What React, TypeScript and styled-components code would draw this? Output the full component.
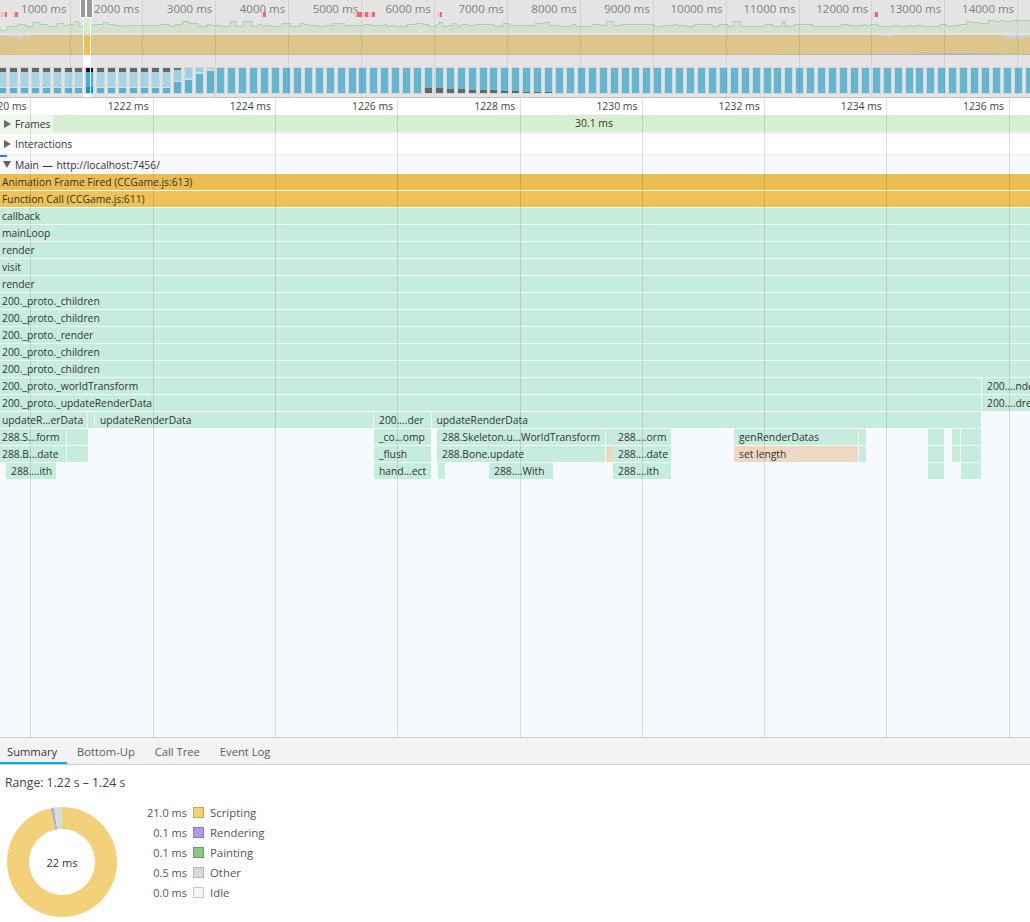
import React from "react";
import styled, { createGlobalStyle } from "styled-components";

const Global = createGlobalStyle`
  html, body { margin: 0; padding: 0; background: #fff; }
  body { font-family: "Open Sans", "Liberation Sans", sans-serif; font-size: 11px; color: #333; }
`;

const Page = styled.div`
  width: 1030px; height: 922px; overflow: hidden; display: flex; flex-direction: column;
`;

/* ---------- overview ---------- */
const Overview = styled.div`
  position: relative; height: 97px; background: #e4e4e4; border-bottom: 1px solid #c0c0c0; flex: none; overflow: hidden;
`;
const OverviewLabels = styled.div`
  height: 13px; overflow: hidden; display: flex; flex: none;
`;
const OverviewLabel = styled.div`
  flex: none; width: 72.9px; text-align: right; padding-right: 3px; box-sizing: border-box;
  font-size: 11.5px; line-height: 18px; color: #808080;
  &:first-child { width: 69.5px; }
`;
const Marks = styled.div`
  position: absolute; top: 12px; left: 0; right: 0; height: 5px;
`;
const Mark = styled.div<{ $x: number; $w: number; $p: number }>`
  position: absolute; top: 0; height: 5px; left: ${(p) => p.$x}px; width: ${(p) => p.$w}px;
  background: linear-gradient(90deg, #e9c9c9 ${(p) => p.$p}%, #ee6a6a ${(p) => p.$p}%);
`;
const ChartSvg = styled.svg`
  display: block; flex: none;
`;
const ThumbStrip = styled.div`
  position: absolute; left: -2px; top: 67px; display: flex;
`;
const thumbBg: Record<string, string> = {
  intro: "linear-gradient(#666 0 4px, #a6d5e7 4px 19px, #cfe4ec 19px 20px, #5cb0cc 20px)",
  sel: "linear-gradient(#111 0 4px, #3fb3e6 4px 19px, #009bd6 19px)",
  fade: "linear-gradient(#707070 0 2px, #9ad0e5 2px 13px, #cfe4ec 13px 14px, #5cb0cc 14px)",
  fade1: "linear-gradient(#9ad0e5 0 10px, #c4e1ec 10px 12px, #60b3cf 12px)",
  fade2: "linear-gradient(#9ad0e5 0 4px, #c4e1ec 4px 6px, #60b3cf 6px)",
  fade3: "linear-gradient(#9ad0e5 0 1px, #c4e1ec 1px 3px, #60b3cf 3px)",
  plain: "#63b7d2",
};
const Thumb = styled.div<{ $kind: string; $dark: number }>`
  flex: none; width: 9px; height: 27px; margin-right: 1.93px; box-sizing: border-box;
  border: 1px solid #d6d6d6;
  background: ${(p) =>
    p.$dark > 0
      ? `linear-gradient(#63b7d2 0 ${25 - p.$dark}px, #666 ${25 - p.$dark}px)`
      : thumbBg[p.$kind]};
`;
const OverviewGrid = styled.div<{ $x: number }>`
  position: absolute; top: 0; bottom: 0; left: ${(p) => p.$x}px; width: 1px; background: rgba(0, 0, 0, 0.07);
`;
const SelectionWindow = styled.div`
  position: absolute; left: 83px; top: 17px; bottom: 0; width: 8px; box-sizing: border-box;
  border: 1px solid #fff; border-width: 0 1px;
  background: linear-gradient(rgba(215,240,205,.75) 0 16px, transparent 16px 18px, #eebf52 18px 38px, #fff 38px 50px, transparent 50px 77px, #fff 77px);
`;
const Handle = styled.div<{ $x: number; $w: number }>`
  position: absolute; top: 0; left: ${(p) => p.$x}px; width: ${(p) => p.$w}px; height: 18px; box-sizing: border-box;
  background: #9a9a9a; border: solid #fff; border-width: 0 1px 1px;
`;

/* ---------- detail timeline ---------- */
const Detail = styled.div`
  position: relative; height: 639px; flex: none; overflow: hidden; background: #f6f9fe;
`;
const Ruler = styled.div`
  height: 17px; background: #fff; display: flex; line-height: 16px; font-size: 10.4px; color: #444;
`;
const RulerLabel = styled.div`
  flex: none; width: 122.2px; display: flex; justify-content: flex-end; padding-right: 4px; box-sizing: border-box; white-space: nowrap; overflow: hidden;
  &:first-child { width: 30.5px; }
`;
const FramesRow = styled.div`
  position: relative; height: 17px; background: #d6efd2; border-bottom: 2px solid #f3f3f3; display: flex; align-items: center; justify-content: center;
`;
const FrameTime = styled.span`
  position: relative; left: 79px; line-height: 17px; font-size: 10.4px; color: #333;
`;
const TrackLabel = styled.div<{ $bg?: string }>`
  position: absolute; left: 0; top: 0; bottom: 0; display: flex; align-items: center; gap: 4px; padding: 0 3px 0 4px;
  background: ${(p) => p.$bg || "transparent"}; font-size: 10.3px; color: #333; word-spacing: 1px;
`;
const Arrow = styled.span<{ $open?: boolean }>`
  display: inline-block; width: 0; height: 0;
  ${(p) =>
    p.$open
      ? "border-left: 4px solid transparent; border-right: 4px solid transparent; border-top: 7px solid #666;margin-left:-1px;"
      : "border-top: 4px solid transparent; border-bottom: 4px solid transparent; border-left: 7px solid #666;"}
`;
const InteractionsRow = styled.div`
  position: relative; height: 20px; background: #fff; border-bottom: 1px solid #eee;
`;
const MainHeader = styled.div`
  position: relative; height: 19px; background: #f6f9fe;
  &::before { content: ""; position: absolute; left: 0; top: 0; width: 7px; height: 2px; background: #3b78e7; }
`;
const FlameRow = styled.div`
  position: relative; height: 17px;
`;
const Bar = styled.div<{ $x: number; $w: number; $c?: string }>`
  position: absolute; top: 0; left: ${(p) => p.$x}px; width: ${(p) => p.$w}px; height: 16px;
  background: ${(p) => p.$c || "#c6ecdd"}; overflow: hidden; white-space: nowrap;
  line-height: 16px; font-size: 10.3px; color: #333; padding-left: ${(p) => (p.$w > 20 ? 2 : 0)}px; box-sizing: border-box;
`;
const Indented = styled.span`
  padding-left: 3px;
`;
const GridLine = styled.div<{ $x: number }>`
  position: absolute; top: 0; bottom: 0; left: ${(p) => p.$x}px; width: 1px; background: rgba(0, 0, 0, 0.12); pointer-events: none;
`;

/* ---------- bottom panel ---------- */
const Tabs = styled.div`
  height: 26px; flex: none; background: #f3f3f3; border-top: 1px solid #ccc; border-bottom: 1px solid #ccc; display: flex;
`;
const Tab = styled.div<{ $active?: boolean }>`
  padding: 0 10px 0 ${(p) => (p.$active ? 7 : 10)}px; line-height: 28px; font-size: 11.2px; color: ${(p) => (p.$active ? "#333" : "#5a5a5a")};
  height: 26px; box-sizing: border-box;
  ${(p) => (p.$active ? "box-shadow: inset 0 -2px 0 #03a9f4;" : "")}
`;
const Summary = styled.div`
  flex: 1; background: #fff; padding: 9px 5px 0; display: flex; flex-direction: column;
`;
const Range = styled.div`
  font-size: 12.2px; line-height: 17px; color: #444;
`;
const SummaryBody = styled.div`
  display: flex; margin-top: 16px; margin-left: 2px;
`;
const PieWrap = styled.div`
  position: relative; width: 110px; height: 110px; flex: none;
`;
const PieLabel = styled.div`
  position: absolute; left: 0; right: 0; top: 0; bottom: 0; display: flex; align-items: center; justify-content: center;
  font-size: 11px; color: #333;
`;
const Legend = styled.div`
  display: grid; grid-template-columns: 70px 11px auto; grid-auto-rows: 20px; column-gap: 6px; align-items: center; margin-top: -5px; height: 100px;
`;
const LegendValue = styled.div`
  text-align: right; font-size: 11px; color: #555; white-space: nowrap;
`;
const Swatch = styled.div<{ $c: string; $b: string }>`
  width: 11px; height: 11px; box-sizing: border-box; background: ${(p) => p.$c}; border: 1px solid ${(p) => p.$b};
`;
const LegendName = styled.div`
  font-size: 11.4px; color: #555;
`;

/* ---------- data ---------- */
function fpsPath(): { line: string; area: string } {
  let seed = 7;
  const rand = () => {
    seed = (seed * 16807) % 2147483647;
    return seed / 2147483647;
  };
  let x = 0;
  let d = "M0 28.5";
  while (x < 1030) {
    const w = 3 + Math.floor(rand() * 7);
    let base = 7;
    if (x > 980) base = 2;
    else if (x > 960) base = 4;
    if (x < 6) base = 11;
    const y = base + Math.floor(rand() * 3) + (rand() > 0.88 ? -3 : 0) + 17.5;
    d += " L" + x + " " + y + " L" + (x + w) + " " + y;
    x += w;
  }
  return { line: d, area: d + " L1030 33 L0 33 Z" };
}
const fps = fpsPath();

const overviewLabels = Array.from({ length: 14 }, (_, i) => `${i + 1}000 ms`);
const overviewGrid = Array.from({ length: 14 }, (_, i) => 69.5 + 72.9 * i);
const marks: [number, number, number][] = [
  [0, 7, 75], [13, 5, 40], [262, 4, 35], [354, 8, 40], [362, 6, 50], [368, 7, 60], [437, 5, 50], [873, 5, 45],
];
const thumbs = Array.from({ length: 96 }, (_, i) => {
  if (i === 8) return "sel";
  if (i < 16) return "intro";
  if (i === 16) return "fade";
  if (i === 17) return "fade1";
  if (i === 18) return "fade2";
  if (i === 19) return "fade3";
  return "plain";
});
const darkHeight = (i: number) => (i >= 39 && i <= 50 ? Math.max(1, Math.round(5 - (i - 39) * 0.4)) : 0);
const rulerLabels = ["1220 ms", "1222 ms", "1224 ms", "1226 ms", "1228 ms", "1230 ms", "1232 ms", "1234 ms", "1236 ms"];
const gridX = [30, 153, 275, 397, 520, 642, 764, 886, 1009];

const YA = "#ecbd52";
const YB = "#eec254";
const OR = "#edd8c3";
type B = [number, number, string?, string?];
const fullRows: [string, string?][] = [
  ["Animation Frame Fired (CCGame.js:613)", YA],
  ["Function Call (CCGame.js:611)", YB],
  ["callback"],
  ["mainLoop"],
  ["render"],
  ["visit"],
  ["render"],
  ["200._proto._children"],
  ["200._proto._children"],
  ["200._proto._render"],
  ["200._proto._children"],
  ["200._proto._children"],
];
const partRows: B[][] = [
  [[0, 981, "200._proto._worldTransform"], [982, 48, "  200....nde"]],
  [[0, 981, "200._proto._updateRenderData"], [982, 48, "  200....dre"]],
  [[0, 87, "updateR...erData"], [88, 6], [95, 278, "  updateRenderData"], [374, 57, "  200....der"], [431.5, 549.5, "  updateRenderData"]],
  [[0, 66, "288.S...form"], [67, 21], [374, 57, "  _co...omp"], [437, 168, "  288.Skeleton.u...WorldTransform"], [605.5, 7], [613, 58, "  288....orm"], [734, 124, "  genRenderDatas"], [858.5, 7.5], [928, 16], [952, 8], [960.5, 20.5]],
  [[0, 66, "288.B...date"], [67, 21], [374, 57, "  _flush"], [437, 168, "  288.Bone.update"], [605.5, 7, undefined, OR], [613, 58, "  288....date"], [734, 124, "  set length", OR], [858.5, 7.5], [928, 16], [952, 8], [960.5, 20.5]],
  [[6, 50, "  288....ith"], [374, 57, "  hand...ect"], [438, 6.5], [489, 63.5, "  288....With"], [613, 58, "  288....ith"], [928, 16], [960.5, 20.5]],
];

const legend: [string, string, string, string][] = [
  ["21.0 ms", "#f3d07a", "#c9a755", "Scripting"],
  ["0.1 ms", "#af9ae8", "#8a78c0", "Rendering"],
  ["0.1 ms", "#8fc386", "#6a9f62", "Painting"],
  ["0.5 ms", "#dadada", "#b5b5b5", "Other"],
  ["0.0 ms", "#f6f6f6", "#c8c8c8", "Idle"],
];

function arc(r0: number, r1: number, a0: number, a1: number) {
  const p = (r: number, a: number) => `${55 + r * Math.sin(a)} ${55 - r * Math.cos(a)}`;
  const large = a1 - a0 > Math.PI ? 1 : 0;
  return `M${p(r1, a0)} A${r1} ${r1} 0 ${large} 1 ${p(r1, a1)} L${p(r0, a1)} A${r0} ${r0} 0 ${large} 0 ${p(r0, a0)} Z`;
}
const total = 21.7;
let acc = 0;
const slices = (
  [
    [21, "#f3d07a"],
    [0.1, "#af9ae8"],
    [0.1, "#8fc386"],
    [0.5, "#dadada"],
  ] as [number, string][]
).map(([v, c]) => {
  const a0 = (acc / total) * Math.PI * 2;
  acc += v;
  const a1 = (acc / total) * Math.PI * 2;
  return { d: arc(33, 55, a0, a1), c };
});

export default function App() {
  return (
    <Page>
      <Global />
      <Overview>
        <OverviewLabels>
          {overviewLabels.map((l) => (
            <OverviewLabel key={l}>{l}</OverviewLabel>
          ))}
        </OverviewLabels>
        <ChartSvg width="1030" height="84" viewBox="0 13 1030 84">
          <path d={fps.area} fill="#d6e0d2" />
          <path d={fps.line} fill="none" stroke="#a3d69e" strokeWidth="1" />
          <path d="M0 35 H1030 V55 H0 Z" fill="#dcc68c" />
          <path d="M0 35 H30 L28 38 L25 36 L21 40 L17 36 L13 38 L9 36 L0 36 Z" fill="#cfcfcf" />
          <path d="M885 35 H892 L889 38 Z M1000 35 H1030 V37 L1020 39 L1008 38 Z" fill="#cfcfcf" />
          <path d="M0 55 L60 54.4 L200 54.6 L400 54.5 L700 54.5 L900 54 L960 53.6 L1030 54 V55 Z" fill="#b8a7d8" />
          <path d="M990 55 L1015 53.6 L1030 55 Z" fill="#a7c992" />
        </ChartSvg>
        <Marks>
          {marks.map(([x, w, p]) => (
            <Mark key={x} $x={x} $w={w} $p={p} />
          ))}
        </Marks>
        <ThumbStrip>
          {thumbs.map((k, i) => (
            <Thumb key={i} $kind={k} $dark={darkHeight(i)} />
          ))}
        </ThumbStrip>
        {overviewGrid.map((x) => (
          <OverviewGrid key={x} $x={x} />
        ))}
        <SelectionWindow />
        <Handle $x={80} $w={6} />
        <Handle $x={86} $w={7} />
      </Overview>
      <Detail>
        <Ruler>
          {rulerLabels.map((l) => (
            <RulerLabel key={l}>{l}</RulerLabel>
          ))}
        </Ruler>
        <FramesRow>
          <FrameTime>30.1 ms</FrameTime>
          <TrackLabel $bg="#ecf8ea">
            <Arrow /> Frames
          </TrackLabel>
        </FramesRow>
        <InteractionsRow>
          <TrackLabel>
            <Arrow /> Interactions
          </TrackLabel>
        </InteractionsRow>
        <MainHeader>
          <TrackLabel>
            <Arrow $open /> Main — http://localhost:7456/
          </TrackLabel>
        </MainHeader>
        {fullRows.map(([t, c], i) => (
          <FlameRow key={i}>
            <Bar $x={0} $w={1030} $c={c}>
              {t}
            </Bar>
          </FlameRow>
        ))}
        {partRows.map((row, i) => (
          <FlameRow key={i}>
            {row.map(([x, w, t, c]) => (
              <Bar key={x} $x={x} $w={w} $c={c}>
                {t && t.startsWith("  ") ? <Indented>{t.trim()}</Indented> : t}
              </Bar>
            ))}
          </FlameRow>
        ))}
        {gridX.map((x) => (
          <GridLine key={x} $x={x} />
        ))}
      </Detail>
      <Tabs>
        <Tab $active>Summary</Tab>
        <Tab>Bottom-Up</Tab>
        <Tab>Call Tree</Tab>
        <Tab>Event Log</Tab>
      </Tabs>
      <Summary>
        <Range>Range: 1.22 s – 1.24 s</Range>
        <SummaryBody>
          <PieWrap>
            <svg width="110" height="110" viewBox="0 0 110 110">
              {slices.map((s) => (
                <path key={s.c} d={s.d} fill={s.c} />
              ))}
            </svg>
            <PieLabel>22 ms</PieLabel>
          </PieWrap>
          <Legend>
            {legend.map(([v, c, b, n]) => (
              <React.Fragment key={n}>
                <LegendValue>{v}</LegendValue>
                <Swatch $c={c} $b={b} />
                <LegendName>{n}</LegendName>
              </React.Fragment>
            ))}
          </Legend>
        </SummaryBody>
      </Summary>
    </Page>
  );
}
